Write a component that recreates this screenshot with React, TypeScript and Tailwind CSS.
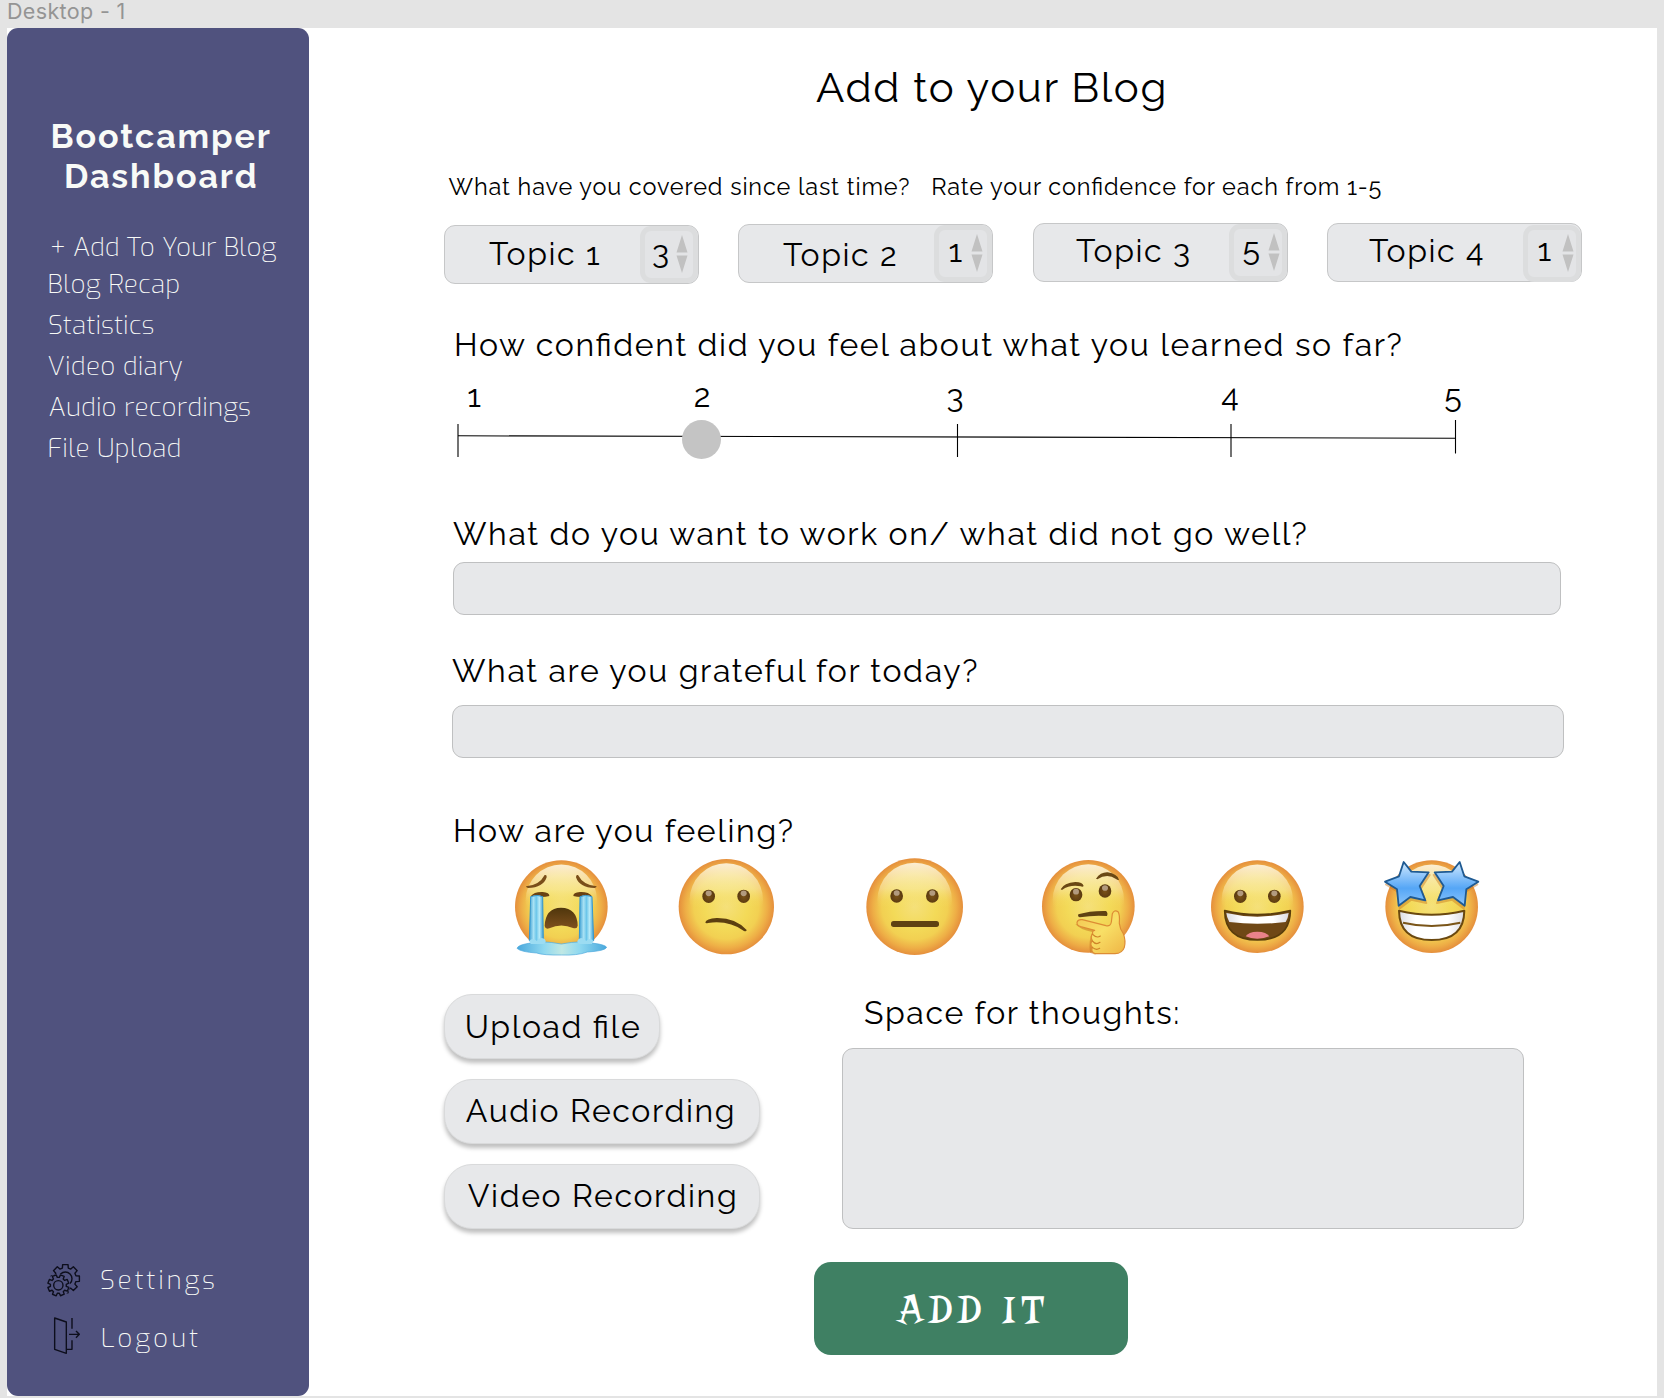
import React from "react";

type Eye = [number, number];

function Defs() {
  return (
    <defs>
      <radialGradient id="face" cx="0.5" cy="0.5" r="0.5">
        <stop offset="0" stopColor="#f5e07a" />
        <stop offset="0.45" stopColor="#f3da58" />
        <stop offset="0.68" stopColor="#f2d052" />
        <stop offset="0.86" stopColor="#eeae46" />
        <stop offset="1" stopColor="#e58f3c" />
      </radialGradient>
      <linearGradient id="shine" x1="0" y1="0" x2="0" y2="1">
        <stop offset="0" stopColor="#fdf6e4" stopOpacity="0.9" />
        <stop offset="0.35" stopColor="#fbf0b8" stopOpacity="0.5" />
        <stop offset="0.52" stopColor="#f8e880" stopOpacity="0.12" />
        <stop offset="0.6" stopColor="#f8e880" stopOpacity="0" />
      </linearGradient>
      <radialGradient id="eye" cx="0.5" cy="0.55" r="0.5">
        <stop offset="0" stopColor="#7a5218" />
        <stop offset="1" stopColor="#5a3a10" />
      </radialGradient>
      <linearGradient id="mouth" x1="0" y1="0" x2="0" y2="1">
        <stop offset="0" stopColor="#4f360c" />
        <stop offset="1" stopColor="#7f501d" />
      </linearGradient>
      <linearGradient id="tear" x1="0" y1="0" x2="1" y2="0">
        <stop offset="0" stopColor="#3ea0d4" />
        <stop offset="0.3" stopColor="#a9e2f4" />
        <stop offset="0.5" stopColor="#6cc6ea" />
        <stop offset="0.72" stopColor="#b9ebf8" />
        <stop offset="1" stopColor="#3a9bd0" />
      </linearGradient>
      <linearGradient id="pool" x1="0" y1="0" x2="1" y2="0">
        <stop offset="0" stopColor="#4aa8dc" />
        <stop offset="0.3" stopColor="#8ed8f0" />
        <stop offset="0.5" stopColor="#c0e8e4" />
        <stop offset="0.7" stopColor="#8ed8f0" />
        <stop offset="1" stopColor="#4aa8dc" />
      </linearGradient>
      <linearGradient id="teeth" x1="0" y1="0" x2="1" y2="0">
        <stop offset="0" stopColor="#dcdce2" />
        <stop offset="0.25" stopColor="#ffffff" />
        <stop offset="0.75" stopColor="#ffffff" />
        <stop offset="1" stopColor="#dcdce2" />
      </linearGradient>
      <linearGradient id="star" x1="0" y1="0" x2="0" y2="1">
        <stop offset="0" stopColor="#d4ebfd" />
        <stop offset="0.25" stopColor="#9dcdfb" />
        <stop offset="0.6" stopColor="#55a6f6" />
        <stop offset="1" stopColor="#8cc5fb" />
      </linearGradient>
      <linearGradient id="hand" x1="0" y1="0" x2="1" y2="1">
        <stop offset="0" stopColor="#f3c552" />
        <stop offset="0.5" stopColor="#f8df66" />
        <stop offset="1" stopColor="#efb545" />
      </linearGradient>
    </defs>
  );
}

function Head({ cx, cy, r }: { cx: number; cy: number; r: number }) {
  return (
    <>
      <circle cx={cx} cy={cy} r={r} fill="url(#face)" />
      <ellipse cx={cx} cy={cy - r * 0.14} rx={r * 0.77} ry={r * 0.77} fill="url(#shine)" />
    </>
  );
}

function Eyes({ at }: { at: Eye[] }) {
  return (
    <>
      {at.map(([x, y]) => (
        <g key={x}>
          <ellipse cx={x} cy={y} rx="19" ry="20" fill="url(#eye)" />
          <ellipse cx={x} cy={y - 9} rx="9" ry="8.5" fill="#b29a7e" />
        </g>
      ))}
    </>
  );
}

function Crying() {
  return (
    <svg viewBox="69 54 288 297" className="h-[99px] w-[96px]">
      <Defs />
      <Head cx={214} cy={200} r={139} />
      <path d="M70 316 L118 312 L310 312 L357 316 L357 351 L70 351Z" fill="#fff" />
      <path d="M108 139 Q148 136 164 105 Q171 103 170 112 Q160 143 114 144 Q108 143 108 139Z M320 139 Q280 136 264 105 Q258 103 258 112 Q268 143 314 144 Q320 143 320 139Z" fill="#7a4e1a" />
      <path d="M122 169 Q132 155 158 156 Q179 158 178 168 Q160 174 122 169Z M306 169 Q296 155 270 156 Q249 158 250 168 Q268 174 306 169Z" fill="#6a4212" />
      <path d="M164 258 Q166 204 213 203 Q262 204 263 257 Q261 268 249 264 Q213 248 178 265 Q166 269 164 258Z" fill="url(#mouth)" />
      <path d="M81 325 Q84 315 116 310 Q150 300 214 312 Q278 300 312 310 Q345 314 350 322 Q345 333 292 336 Q262 347 214 345 Q160 346 140 339 Q92 336 81 325Z" fill="url(#pool)" stroke="#4aa8dc" strokeWidth="2" />
      <path d="M122 170 Q142 162 158 170 L160 300 Q138 312 118 302Z" fill="url(#tear)" stroke="#3798cf" strokeWidth="3" />
      <path d="M306 170 Q286 162 270 170 L268 300 Q290 312 311 302Z" fill="url(#tear)" stroke="#3798cf" strokeWidth="3" />
      <path d="M118 302 Q128 292 141 303 Q148 288 164 297 Q172 308 160 312 L122 312Z M310 302 Q300 292 288 303 Q280 288 266 297 Q256 308 270 312 L306 312Z" fill="#9cdcf2" />
    </svg>
  );
}

function Confused() {
  return (
    <svg viewBox="561 54 297 297" className="h-[99px] w-[99px]">
      <Head cx={709} cy={200} r={143} />
      <Eyes at={[[656, 169], [761, 169]]} />
      <path d="M646 247 Q648 236 680 234 Q736 233 770 270 Q769 276 762 273 Q716 240 654 249 Q647 251 646 247Z" fill="#5c3f10" />
    </svg>
  );
}

function Neutral() {
  return (
    <svg viewBox="75 54 297 297" className="h-[99px] w-[99px]">
      <Head cx={224} cy={200} r={145} />
      <Eyes at={[[170, 168], [277, 168]]} />
      <rect x="153" y="243" width="144" height="18" rx="8" fill="#5f4212" />
    </svg>
  );
}

function Thinking() {
  return (
    <svg viewBox="600 54 297 297" className="h-[99px] w-[99px]">
      <Head cx={745} cy={199} r={139} />
      <Eyes at={[[708, 164], [795, 153]]} />
      <path d="M662 148 Q672 128 706 126 Q728 126 731 138 Q728 142 722 139 Q690 133 666 150Z M768 116 Q782 96 803 97 Q832 102 837 119 Q834 122 828 117 Q802 98 772 118Z" fill="#6a4814" />
      <path d="M715 223 Q750 212 798 213 Q805 219 801 228 Q760 225 720 232 Q712 231 715 223Z" fill="#5f4212" />
      <path d="M706 252 Q718 268 757 276 Q745 300 750 338 L766 344 L770 262Z" fill="#c97a22" opacity="0.55" />
      <path d="M711 247 Q714 237 727 239 L798 257 Q812 260 814 246 L817 221 Q823 208 834 215 Q840 224 838 250 Q840 268 850 281 Q858 302 853 322 Q847 340 825 341 L766 341 Q752 337 757 322 Q748 312 757 302 Q750 290 758 281 Q756 272 764 271 L722 260 Q710 256 711 247Z" fill="url(#hand)" stroke="#dd8c34" strokeWidth="3.5" strokeLinejoin="round" />
      <path d="M758 283 Q770 296 781 288 M757 303 Q768 316 780 307 M757 322 Q768 332 779 325" fill="none" stroke="#cf8328" strokeWidth="3.5" strokeLinecap="round" />
    </svg>
  );
}

function Grinning() {
  return (
    <svg viewBox="60 54 288 297" className="h-[99px] w-[96px]">
      <Head cx={202} cy={200} r={139} />
      <Eyes at={[[151, 169], [253, 169]]} />
      <path d="M104 212 Q202 236 301 212 Q300 300 202 300 Q105 300 104 212Z" fill="#6f4816" stroke="#5a3d0b" strokeWidth="5" strokeLinejoin="round" />
      <path d="M109 219 Q202 241 296 219 Q294 236 287 246 Q202 257 118 246 Q110 232 109 219Z" fill="url(#teeth)" />
      <path d="M167 289 Q175 275 202 275 Q230 275 238 289 Q222 296 202 296 Q182 296 167 289Z" fill="#e9828a" />
    </svg>
  );
}

const LEFT_STAR = "M641 66 L664 95 L716 97 L689 138 L706 181 L661 171 L626 197 L621 148 L585 125 L627 109Z";

function StarStruck() {
  return (
    <svg viewBox="576 54 297 297" className="h-[99px] w-[99px]">
      <Head cx={725} cy={200} r={139} />
      <path d="M627 212 Q725 236 823 212 Q822 300 725 300 Q628 300 627 212Z" fill="url(#teeth)" stroke="#6a480f" strokeWidth="6" strokeLinejoin="round" />
      <path d="M639 248 Q725 268 811 248" fill="none" stroke="#7a5518" strokeWidth="6" />
      {["", "matrix(-1 0 0 1 1450 0)"].map((t) => (
        <g key={t} transform={t || undefined}>
          <path d={LEFT_STAR} transform="translate(3 8)" fill="#c9781d" opacity="0.45" stroke="#c9781d" strokeWidth="6" strokeLinejoin="round" />
          <path d={LEFT_STAR} fill="url(#star)" stroke="#1f5a92" strokeWidth="5.5" strokeLinejoin="round" />
        </g>
      ))}
    </svg>
  );
}

function gear(cx: number, cy: number, inner: number, outer: number, turn: number) {
  const pts: string[] = [];
  for (let i = 0; i < 8; i++) {
    const a = turn + (i * Math.PI) / 4;
    const p = (r: number, o: number) => `${(cx + r * Math.cos(a + o)).toFixed(1)} ${(cy + r * Math.sin(a + o)).toFixed(1)}`;
    pts.push(`${i ? "L" : "M"}${p(inner, -0.27)} L${p(outer, -0.19)} L${p(outer, 0.19)} L${p(inner, 0.27)}`);
  }
  return pts.join(" ") + "Z";
}

function GearsIcon() {
  return (
    <svg viewBox="138 128 108 104" className="h-[34.67px] w-[36px] shrink-0" fill="none" stroke="#0d0e1c" strokeWidth="4.2" strokeLinejoin="round">
      <mask id="behind">
        <rect x="130" y="120" width="120" height="120" fill="#fff" stroke="none" />
        <circle cx="175" cy="195" r="35" fill="#000" stroke="none" />
      </mask>
      <g mask="url(#behind)">
        <path d={gear(196, 175, 33, 43, 0)} />
        <circle cx="196" cy="175" r="20" />
      </g>
      <path d={gear(175, 195, 24, 32, 0.39)} />
      <circle cx="175" cy="195" r="14" />
    </svg>
  );
}

function LogoutIcon() {
  return (
    <svg viewBox="135 285 110 120" className="-mt-[4px] h-[40px] w-[36.67px] shrink-0" fill="none" stroke="#0d0e1c" strokeWidth="4.2" strokeLinejoin="round">
      <path d="M164 291 L199 303 L199 397 L164 385Z M216 291 V323 M207 340 H238 M228 330 L238 340 L228 350 M216 358 V385 H200" />
    </svg>
  );
}

function Arrows() {
  return (
    <svg viewBox="0 0 12 38" className="h-[38px] w-[12px]" fill="#c1c1c1">
      <path d="M6 0 L11.5 17.6 H0.5Z M0.5 20.6 H11.5 L6 38Z" />
    </svg>
  );
}

const TOPICS = [
  { name: "Topic 1", value: 3, box: "mt-[2px]", label: "pl-[44px] pt-[8px]", step: "", digit: "w-[30.5px] pl-[7px] pt-px" },
  { name: "Topic 2", value: 1, box: "mt-px ml-[39px]", label: "pl-[44px] pt-[10px]", step: "", digit: "w-[32px] pl-[9.5px] pt-px" },
  { name: "Topic 3", value: 5, box: "ml-[40px]", label: "pl-[42px] pt-[7px]", step: "", digit: "w-[34px] pl-[8.5px] pt-0" },
  { name: "Topic 4", value: 1, box: "ml-[39px]", label: "pl-[41px] pt-[7px]", step: "mt-px", digit: "w-[34px] pl-[9.5px] pt-0" },
];

const NAV = [
  { text: "+ Add To Your Blog", cls: "pl-[43px] h-[37.5px] tracking-[-0.04px]" },
  { text: "Blog Recap", cls: "pl-[40.5px] h-[41px] tracking-[0.2px]" },
  { text: "Statistics", cls: "pl-[41px] h-[41px]" },
  { text: "Video diary", cls: "pl-[40.5px] h-[41px] tracking-[0.2px]" },
  { text: "Audio recordings", cls: "pl-[41.5px] h-[41px] tracking-[0.08px]" },
  { text: "File Upload", cls: "pl-[40.5px] h-[41px] tracking-[0.15px]" },
];

const FACES = [
  { name: "crying", Icon: Crying, cls: "ml-[204px]" },
  { name: "confused", Icon: Confused, cls: "ml-[68px]" },
  { name: "neutral", Icon: Neutral, cls: "ml-[89px]" },
  { name: "thinking", Icon: Thinking, cls: "ml-[76px]" },
  { name: "grinning", Icon: Grinning, cls: "ml-[71px]" },
  { name: "star-struck", Icon: StarStruck, cls: "ml-[76px]" },
];

export default function App() {
  return (
    <div className="h-[1398px] w-[1664px] overflow-hidden bg-[#e4e4e4] font-['Raleway','Lato',sans-serif] text-black">
      <header className="h-[28px] pl-[7px] font-['Inter',sans-serif] text-[21.5px] leading-[23px] tracking-[0.35px] text-[#949494]">Desktop - 1</header>
      <div className="ml-[7px] flex h-[1368px] w-[1650px] bg-white">
        <aside className="flex h-[1368px] w-[301.5px] flex-col rounded-[11px] bg-[#50527e] pt-[87.5px] text-[#f8faf7]">
          <h1 className="pl-[7px] text-center text-[34px] leading-[40px] font-bold tracking-[1.9px]">
            Bootcamper
            <br />
            Dashboard
          </h1>
          <nav className="mt-[31px] font-['Exo',sans-serif] text-[26px] font-extralight">
            {NAV.map((n) => (
              <div key={n.text} className={n.cls}>
                <a className="block leading-[41px] whitespace-pre">{n.text}</a>
              </div>
            ))}
          </nav>
          <div className="mt-auto mb-[38px] flex flex-col gap-[18px] font-['Exo',sans-serif] text-[26px] font-extralight">
            <div className="flex h-[40px] items-center pl-[39px]">
              <GearsIcon />
              <span className="pl-[18px] tracking-[2.7px]">Settings</span>
            </div>
            <div className="flex h-[40px] items-center pl-[38px]">
              <LogoutIcon />
              <span className="pl-[19px] tracking-[2.9px]">Logout</span>
            </div>
          </div>
        </aside>

        <main className="ml-[0.5px] flex flex-1 flex-col [font-feature-settings:'liga'_1]">
          <h2 className="mt-[35px] ml-[507px] text-[42px] leading-[50px] tracking-[1.65px]">Add to your Blog</h2>

          <div className="mt-[59px] ml-[139.5px] flex gap-[21px] text-[23.5px] leading-[30px] tracking-[0.85px] whitespace-nowrap">
            <p>What have you covered since last time?</p>
            <p>Rate your confidence for each from 1-5</p>
          </div>

          <div className="mt-[21px] ml-[135px] flex h-[62px] items-start text-[32px] leading-[40px] tracking-[1.6px]">
            {TOPICS.map((t) => (
              <div key={t.name} className={`${t.box} flex h-[59px] w-[255px] shrink-0 rounded-[11px] border border-[#c6c7c8] bg-[#e7e8ea]`}>
                <span className={`${t.label} flex-1 whitespace-nowrap`}>{t.name}</span>
                <div className={`${t.step} flex h-[57px] w-[58px] shrink-0 rounded-[11px] border-[5px] border-[#dcddde] bg-[#e3e4e6]`}>
                  <span className={t.digit}>{t.value}</span>
                  <div className="pt-[4px]">
                    <Arrows />
                  </div>
                </div>
              </div>
            ))}
          </div>

          <h3 className="mt-[40px] ml-[145px] text-[32px] leading-[40px] tracking-[1.64px]">How confident did you feel about what you learned so far?</h3>
          <div className="mt-[10px] ml-[145px] flex h-[40px] pt-px text-center text-[32px] leading-[40px]">
            <span className="w-[40px]">1</span>
            <span className="ml-[188px] w-[40px]">2</span>
            <span className="ml-[213px] w-[40px]">3</span>
            <span className="ml-[235px] w-[40px]">4</span>
            <span className="ml-[183px] w-[40px]">5</span>
          </div>
          <svg viewBox="0 0 1010 45" className="ml-[144px] h-[45px] w-[1010px] shrink-0" fill="none" stroke="#000">
            <path d="M5 20.8 L1002 23.2" strokeWidth="1.1" />
            <path d="M5 9 V42 M504.5 9 V42 M778 9 V42 M1002.5 5 V38.5" strokeWidth="1.1" />
            <circle cx="248.5" cy="24.5" r="19.5" fill="#c4c4c4" stroke="none" />
          </svg>

          <h3 className="mt-[54px] ml-[144px] text-[32px] leading-[40px] tracking-[1.64px]">What do you want to work on/ what did not go well?</h3>
          <div className="mt-[8px] ml-[144px] h-[53px] w-[1108px] rounded-[11px] border border-[#bfc0c1] bg-[#e7e8ea]" />

          <h3 className="mt-[36px] ml-[143px] text-[32px] leading-[40px] tracking-[1.63px]">What are you grateful for today?</h3>
          <div className="mt-[14px] ml-[143px] h-[53px] w-[1112px] rounded-[11px] border border-[#bfc0c1] bg-[#e7e8ea]" />

          <h3 className="mt-[53px] ml-[144px] text-[32px] leading-[40px] tracking-[1.62px]">How are you feeling?</h3>
          <div className="mt-[7px] flex h-[98px]">
            {FACES.map(({ name, Icon, cls }) => (
              <div key={name} className={`${cls} shrink-0`}>
                <Icon />
              </div>
            ))}
          </div>

          <div className="mt-[36px] ml-[135px] flex text-[32px] leading-[40px] tracking-[1.62px]">
            <div className="flex w-[397.5px] flex-col items-start gap-[20px] pt-[2px]">
              <button className="h-[65px] w-[216px] rounded-[28px] border border-[#d9dadb] bg-[#e7e8ea] pl-[2px] tracking-[1.6px] shadow-[0_4px_4px_rgba(0,0,0,0.25)]">Upload file</button>
              <button className="h-[65px] w-[316px] rounded-[28px] border border-[#d9dadb] bg-[#e7e8ea] pr-[2px] pb-px tracking-[1.62px] shadow-[0_4px_4px_rgba(0,0,0,0.25)]">Audio Recording</button>
              <button className="h-[65px] w-[316px] rounded-[28px] border border-[#d9dadb] bg-[#e7e8ea] pb-px pl-[2px] tracking-[1.62px] shadow-[0_4px_4px_rgba(0,0,0,0.25)]">Video Recording</button>
            </div>
            <div>
              <h3 className="pt-px pl-[22.5px] tracking-[1.6px]">Space for thoughts:</h3>
              <div className="mt-[15px] h-[181px] w-[682px] rounded-[11px] border border-[#bfc0c1] bg-[#e7e8ea]" />
            </div>
          </div>

          <button className="mt-[33px] ml-[504.5px] h-[93px] w-[314px] rounded-[17px] bg-[#3f8063] pt-[2px] pl-[6px] font-['Risque','Liberation_Serif',serif] text-[40px] tracking-[5px] text-white">ADD IT</button>
        </main>
      </div>
    </div>
  );
}
